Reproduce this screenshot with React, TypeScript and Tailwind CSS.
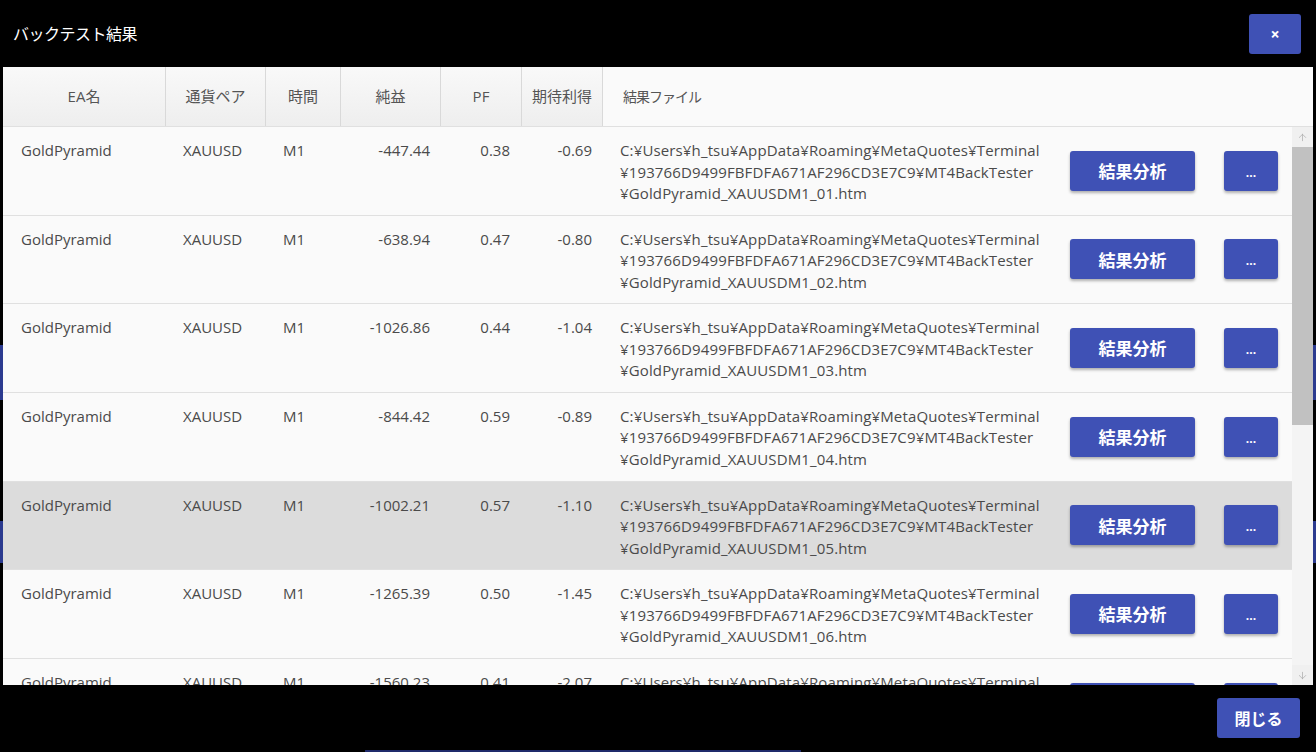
import React from 'react';
import { ArrowUp, ArrowDown } from 'lucide-react';

const rows = [
  { net: '-447.44', pf: '0.38', exp: '-0.69', no: '01' },
  { net: '-638.94', pf: '0.47', exp: '-0.80', no: '02' },
  { net: '-1026.86', pf: '0.44', exp: '-1.04', no: '03' },
  { net: '-844.42', pf: '0.59', exp: '-0.89', no: '04' },
  { net: '-1002.21', pf: '0.57', exp: '-1.10', no: '05', selected: true },
  { net: '-1265.39', pf: '0.50', exp: '-1.45', no: '06' },
  { net: '-1560.23', pf: '0.41', exp: '-2.07', no: '07' },
];

const cols = 'grid grid-cols-[163px_100px_75px_100px_81px_81px_452px_155px_82px]';

function HeaderCell({ label, w, last }: { label: string; w: string; last?: boolean }) {
  return (
    <div
      className={
        last
          ? `${w} h-full flex items-center pl-[20px] bg-[#fafafa] text-[#555] text-[14px] tracking-[-1px]`
          : `${w} h-full flex items-center justify-center bg-gradient-to-b from-[#f9f9f9] to-[#eeeeee] border-r border-[#d9d9d9] text-[#555]`
      }
    >
      {label}
    </div>
  );
}

export default function App() {
  return (
    <div className="relative w-[1316px] h-[752px] bg-black overflow-hidden flex flex-col font-['Open_Sans','Noto_Sans_CJK_JP',sans-serif]">
      {/* page behind the dialog */}
      <div className="absolute left-0 top-[345px] w-[3px] h-[55px] bg-[#2b3a8f]" />
      <div className="absolute left-0 top-[521px] w-[3px] h-[42px] bg-[#2b3a8f]" />
      <div className="absolute right-0 top-[345px] w-[3px] h-[55px] bg-[#2b3a8f]" />
      <div className="absolute right-0 top-[521px] w-[3px] h-[42px] bg-[#2b3a8f]" />
      <div className="absolute left-[365px] bottom-0 w-[436px] h-[2px] bg-[#1f2a6b]" />

      {/* Title bar */}
      <div className="h-[67px] shrink-0 flex items-center justify-between pl-[13px] pr-[15px]">
        <span className="text-white text-[16px] font-['Noto_Sans_CJK_JP',sans-serif] tracking-[-0.5px] pb-[1px]">
          バックテスト結果
        </span>
        <button className="w-[52px] h-[40px] rounded-[3px] bg-[#3f51b5] text-white text-[16px] font-bold flex items-center justify-center">
          ×
        </button>
      </div>

      {/* Table */}
      <div className="relative h-[618px] shrink-0 mx-[3px] bg-[#fafafa] flex flex-col overflow-hidden text-[15px] text-[#4a4a4a]">
        <div className="h-[60px] shrink-0 flex border-b border-[#e0e0e0] text-[15px]">
          <HeaderCell label="EA名" w="w-[163px]" />
          <HeaderCell label="通貨ペア" w="w-[100px]" />
          <HeaderCell label="時間" w="w-[75px]" />
          <HeaderCell label="純益" w="w-[100px]" />
          <HeaderCell label="PF" w="w-[81px]" />
          <HeaderCell label="期待利得" w="w-[81px]" />
          <HeaderCell label="結果ファイル" w="flex-1" last />
        </div>

        <div className="flex-1 flex overflow-hidden">
          <div className="w-[1289px] overflow-hidden">
            {rows.map((r) => (
              <div
                key={r.no}
                className={`${cols} h-[88.67px] border-b border-[#e0e0e0] ${r.selected ? 'bg-[#dcdcdc]' : 'bg-[#fafafa]'}`}
              >
                <div className="pl-[18px] pt-[13px] leading-[21.5px]">GoldPyramid</div>
                <div className="pl-[17px] pt-[13px] leading-[21.5px]">XAUUSD</div>
                <div className="pl-[17px] pt-[13px] leading-[21.5px]">M1</div>
                <div className="pr-[11px] pt-[13px] leading-[21.5px] text-right">{r.net}</div>
                <div className="pr-[12px] pt-[13px] leading-[21.5px] text-right">{r.pf}</div>
                <div className="pr-[11px] pt-[13px] leading-[21.5px] text-right">{r.exp}</div>
                <div className="pl-[17px] pt-[13px] leading-[21.5px] tracking-[0.14px]">
                  <div>C:¥Users¥h_tsu¥AppData¥Roaming¥MetaQuotes¥Terminal</div>
                  <div>¥193766D9499FBFDFA671AF296CD3E7C9¥MT4BackTester</div>
                  <div>¥GoldPyramid_XAUUSDM1_{r.no}.htm</div>
                </div>
                <div className="pl-[15px] flex items-center">
                  <button className="w-[125px] h-[40px] rounded-[3px] bg-[#3f51b5] text-white text-[17px] font-bold font-['Noto_Sans_CJK_JP',sans-serif] shadow-[0_2px_3px_rgba(0,0,0,0.3)]">
                    結果分析
                  </button>
                </div>
                <div className="pl-[14px] flex items-center">
                  <button className="w-[54px] h-[40px] rounded-[3px] bg-[#3f51b5] text-white text-[12px] font-bold shadow-[0_2px_3px_rgba(0,0,0,0.3)] pt-[4px]">
                    ...
                  </button>
                </div>
              </div>
            ))}
          </div>

          {/* scrollbar */}
          <div className="w-[21px] flex flex-col bg-[#f4f4f4]">
            <div className="h-[20px] flex items-center justify-center bg-[#f0f0f0]">
              <ArrowUp size={11} color="#a8a8a8" strokeWidth={1.5} />
            </div>
            <div className="h-[278px] bg-[#c1c1c1]" />
            <div className="flex-1" />
            <div className="h-[20px] flex items-center justify-center bg-[#f0f0f0]">
              <ArrowDown size={11} color="#a8a8a8" strokeWidth={1.5} />
            </div>
          </div>
        </div>
      </div>

      {/* Footer */}
      <div className="h-[67px] shrink-0 flex items-start justify-end pt-[13px] pr-[16px]">
        <button className="w-[83px] h-[40px] rounded-[3px] bg-[#3f51b5] text-white text-[16px] font-bold font-['Noto_Sans_CJK_JP',sans-serif] shadow-[0_2px_3px_rgba(0,0,0,0.3)]">
          閉じる
        </button>
      </div>
    </div>
  );
}
